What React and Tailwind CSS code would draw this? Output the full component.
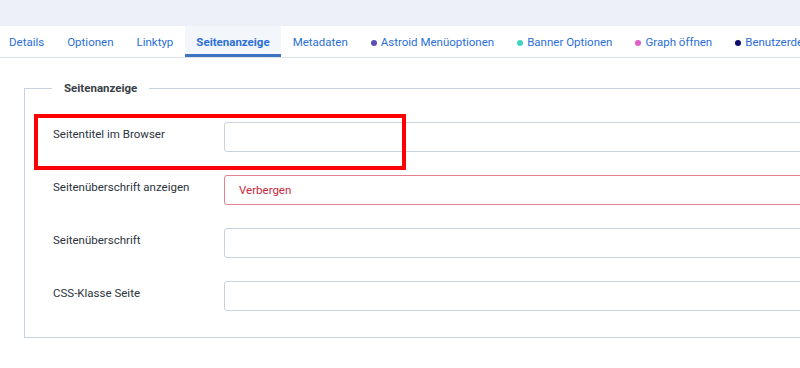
import React from "react";

const tabs = [
  { label: "Details" },
  { label: "Optionen" },
  { label: "Linktyp" },
  { label: "Seitenanzeige", active: true },
  { label: "Metadaten" },
  { label: "Astroid Menüoptionen", dot: "bg-[#5b4fb3]" },
  { label: "Banner Optionen", dot: "bg-[#3fd4c6]" },
  { label: "Graph öffnen", dot: "bg-[#df5fc8]" },
  { label: "Benutzerdefinierte Felder", dot: "bg-[#0c0c6e]" },
];

function Field({ label, value, invalid }) {
  return (
    <div className="flex items-start">
      <div className="w-[171px] shrink-0 pt-[4px] text-[11.5px] text-[#2b3440]">{label}</div>
      <div
        className={
          "h-[30px] w-[700px] rounded-[3px] border bg-white px-[14px] text-[11.5px] leading-[28px] " +
          (invalid ? "border-[#e68090] text-[#c8283c]" : "border-[#c9d3de]")
        }
      >
        {value}
      </div>
    </div>
  );
}

export default function App() {
  return (
    <div className="relative h-[368px] w-[800px] overflow-hidden bg-white font-['Roboto',sans-serif]">
      <div className="h-[26px] bg-[#edf0f7]" />
      <div className="ml-[-2.5px] flex h-[32px] whitespace-nowrap border-b border-[#dde2e8] text-[11.5px]">
        {tabs.map((t) => (
          <div
            key={t.label}
            className={
              "flex items-center gap-[4px] px-[11.5px] pt-[2px] " +
              (t.active
                ? "border-b-[3px] border-[#3f74c2] bg-[#f3f6fb] pt-[5px] font-bold text-[#2b6fd6]"
                : "text-[#2b6fd6]")
            }
          >
            {t.dot && <span className={"inline-block h-[6px] w-[6px] rounded-full " + t.dot} />}
            {t.label}
          </div>
        ))}
      </div>
      <div className="pl-[24px] pt-[22px]">
        <fieldset className="w-[900px] border border-[#c7d2de] px-[28px] pb-[26px] pt-[25px]">
          <legend className="ml-[-1px] px-[12px] text-[11.5px] font-bold text-[#3a4048]">Seitenanzeige</legend>
          <div className="flex flex-col gap-[23px]">
            <Field label="Seitentitel im Browser" />
            <Field label="Seitenüberschrift anzeigen" value="Verbergen" invalid />
            <Field label="Seitenüberschrift" />
            <Field label="CSS-Klasse Seite" />
          </div>
        </fieldset>
      </div>
      <div className="absolute left-[34px] top-[114px] h-[56px] w-[372px] border-[4px] border-[#ff0000]" />
    </div>
  );
}
